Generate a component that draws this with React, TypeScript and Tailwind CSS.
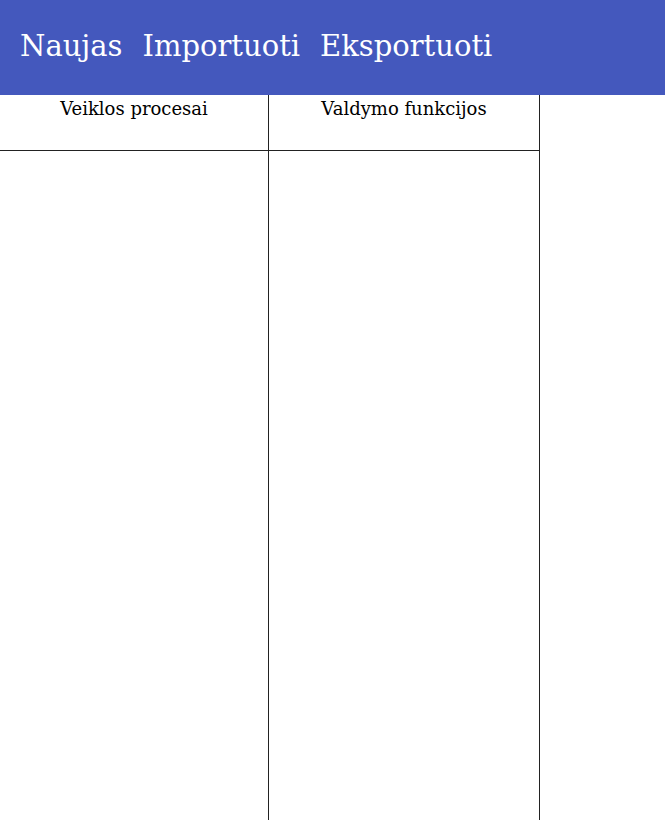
export default function App() {
  const columns = ["Veiklos procesai", "Valdymo funkcijos"];
  return (
    <div className="min-h-screen bg-white font-['DejaVu_Serif',serif]">
      <header className="flex h-[95px] items-center gap-5 bg-[#4458bd] px-5 pb-[1px] text-[29px] text-white">
        <span>Naujas</span>
        <span>Importuoti</span>
        <span>Eksportuoti</span>
      </header>
      <div className="flex">
        {columns.map((title, i) => (
          <div
            key={title}
            className={`flex h-[725px] flex-col border-r border-[#222] ${i === 0 ? "w-[269px]" : "w-[271px]"}`}
          >
            <div className="h-[56px] border-b border-[#222] text-center text-[18px] text-black">
              {title}
            </div>
          </div>
        ))}
      </div>
    </div>
  );
}
